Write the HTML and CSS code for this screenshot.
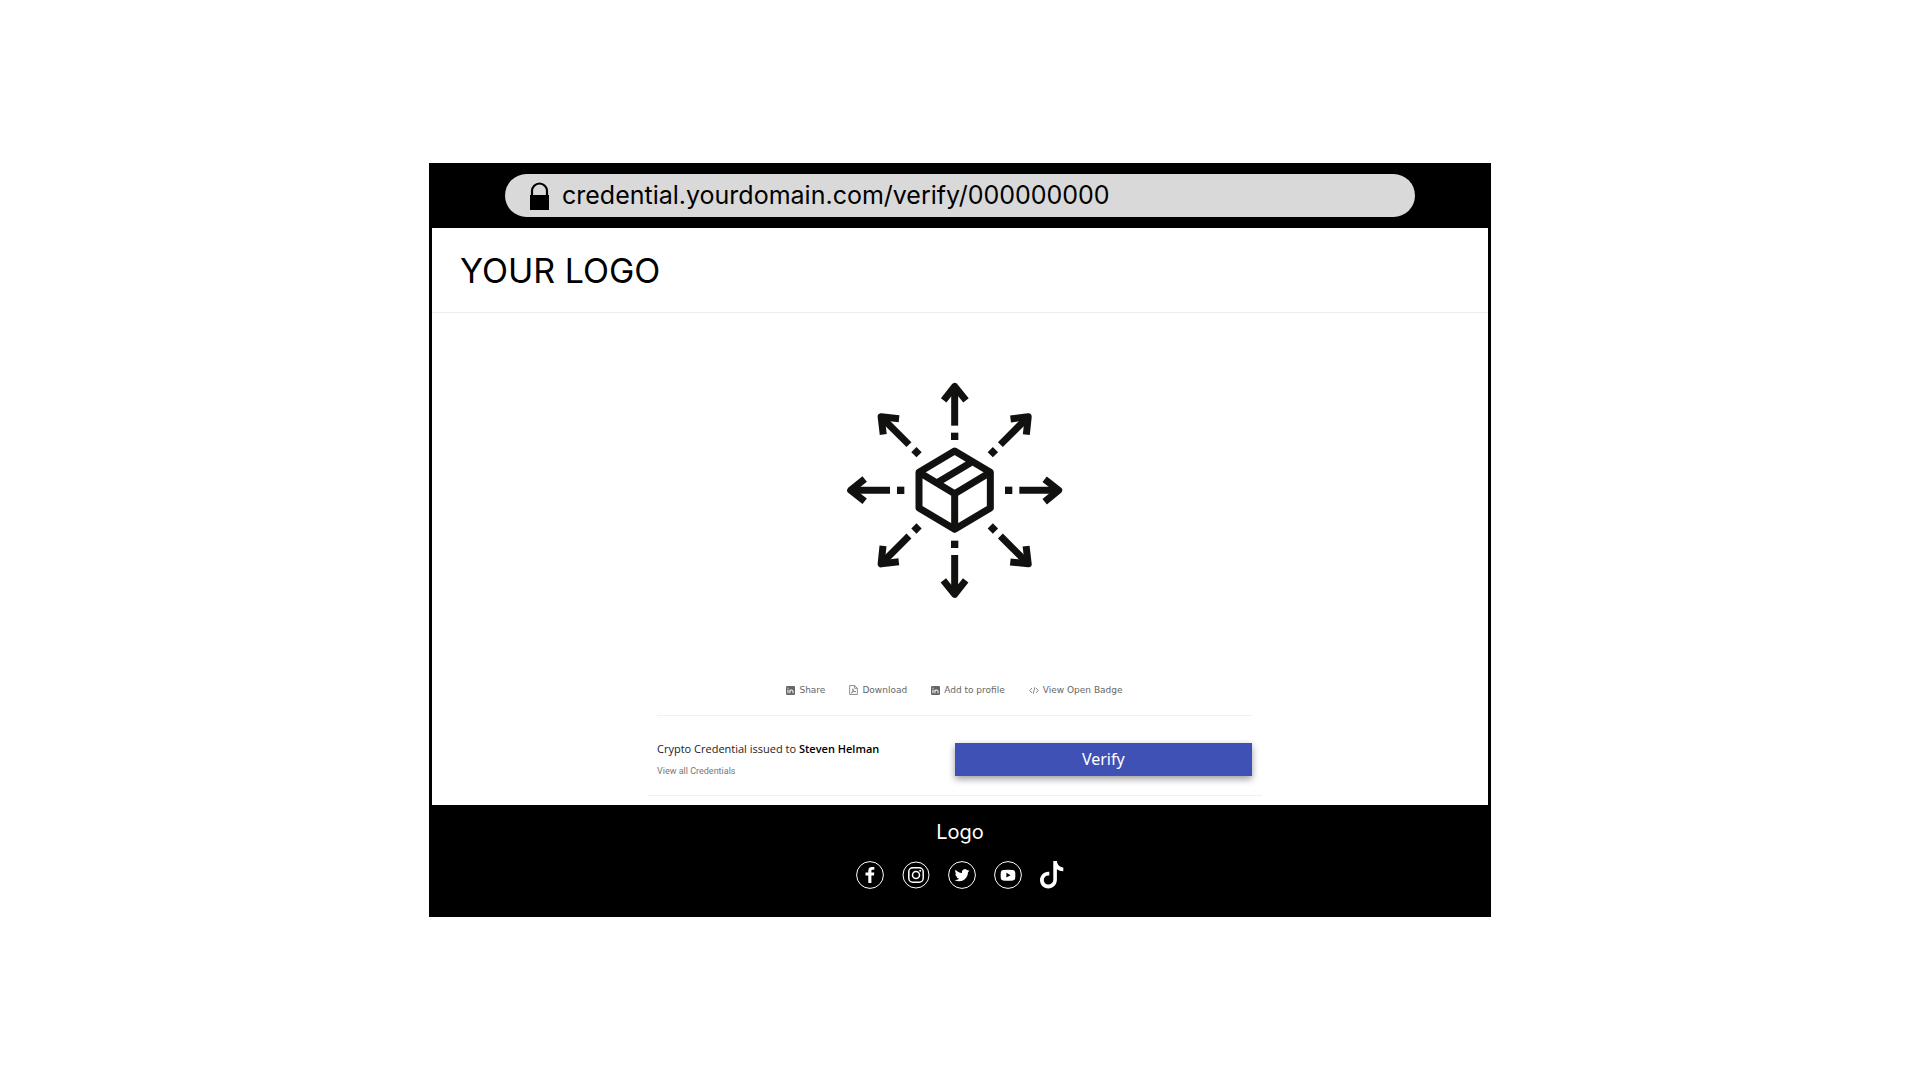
FILE: index.html
```html
<!DOCTYPE html>
<html lang="en">
<head>
<meta charset="utf-8">
<meta name="viewport" content="width=device-width, initial-scale=1">
<title>Credential</title>
<link rel="stylesheet" href="styles.css">
</head>
<body>
<div class="browser">
  <div class="toolbar">
    <label class="address">
      <svg class="lock" viewBox="0 0 20 28" aria-hidden="true"><path d="M0 13h19v15H0z"/><path d="M2 14V9a7.500 7.500 0 0 1 15 0v5" fill="none" stroke="#000" stroke-width="2.200"/></svg>
      <input class="address-input" type="text" value="credential.yourdomain.com/verify/000000000" aria-label="Address" readonly>
    </label>
  </div>
  <div class="page">
    <header class="site-header"><span class="brand">YOUR LOGO</span></header>
    <main class="content">
      <svg class="badge" viewBox="0 0 750 750" role="img" aria-label="Package with arrows in eight directions">
        <defs>
          <g id="arrow">
            <path d="M374 167V58" stroke-width="21"/>
            <path d="M341 91L374 49L408 91" stroke-width="21" stroke-linejoin="round"/>
            <path d="M374 210V188" stroke-width="22"/>
          </g>
        </defs>
        <g fill="none" stroke="#11110f">
          <use href="#arrow"/>
          <use href="#arrow" transform="rotate(45 374 361)"/>
          <use href="#arrow" transform="rotate(90 374 361)"/>
          <use href="#arrow" transform="rotate(135 374 361)"/>
          <use href="#arrow" transform="rotate(180 374 361)"/>
          <use href="#arrow" transform="rotate(225 374 361)"/>
          <use href="#arrow" transform="rotate(270 374 361)"/>
          <use href="#arrow" transform="rotate(315 374 361)"/>
          <path d="M374 243L481 307V414L374 478L267 414V307ZM267 307L374 371L481 307M374 371V478M320 339L427 275" stroke-width="21" stroke-linejoin="round"/>
        </g>
      </svg>
      <nav class="actions" aria-label="Credential actions">
        <a class="action" href="#share"><svg class="action-icon" viewBox="0 0 16 16" aria-hidden="true"><rect width="16" height="16" rx="2" fill="currentColor"/><path d="M3.500 6.500V13M3.500 3v2M7 13V6.500M7 9.500c0-3 5.500-3.500 5.500 0V13" fill="none" stroke="#fff" stroke-width="1.800"/></svg>Share</a>
        <a class="action" href="#download"><svg class="action-icon file" viewBox="0 0 16 18" aria-hidden="true"><path d="M1 1h9l5 5v11H1zM10 1v5h5M4 14.500c2-1 4-5 3-7.500-1-1-1 5 5 5-2-1-5.500 0-8 2.500" fill="none" stroke="currentColor" stroke-width="1.300"/></svg>Download</a>
        <a class="action" href="#profile"><svg class="action-icon" viewBox="0 0 16 16" aria-hidden="true"><rect width="16" height="16" rx="2" fill="currentColor"/><path d="M3.500 6.500V13M3.500 3v2M7 13V6.500M7 9.500c0-3 5.500-3.500 5.500 0V13" fill="none" stroke="#fff" stroke-width="1.800"/></svg>Add to profile</a>
        <a class="action" href="#badge"><svg class="action-icon code" viewBox="0 0 20 16" aria-hidden="true"><path d="M6 3L1.500 8L6 13M14 3l4.500 5L14 13M11.500 1.500l-3 13" fill="none" stroke="currentColor" stroke-width="1.600"/></svg>View Open Badge</a>
      </nav>
      <section class="issued">
        <div class="recipient">
          <p class="recipient-name">Crypto Credential issued to <strong>Steven Helman</strong></p>
          <a class="all-link" href="#all">View all Credentials</a>
        </div>
        <button class="verify" type="button">Verify</button>
      </section>
    </main>
  </div>
  <footer class="site-footer">
    <span class="footer-logo">Logo</span>
    <nav class="socials" aria-label="Social media">
      <a class="social" href="#facebook" aria-label="Facebook"><svg class="social-icon" viewBox="0 0 28 28"><circle cx="14" cy="14" r="13.400" fill="none" stroke="#fff"/><path d="M12.300 22v-7.500H9.500v-3h2.800V9.600C12.300 7 13.800 6 16 6h2.300v2.800h-1.600c-1 0-1.300.5-1.300 1.300v1.400h2.900l-.4 3h-2.500V22z" fill="#fff"/></svg></a>
      <a class="social" href="#instagram" aria-label="Instagram"><svg class="social-icon" viewBox="0 0 28 28"><g fill="none" stroke="#fff"><circle cx="14" cy="14" r="13"/><rect x="6.800" y="6.800" width="14.400" height="14.400" rx="4" stroke-width="1.500"/><circle cx="14" cy="14" r="3.500" stroke-width="1.500"/></g><circle cx="18.200" cy="9.800" r="1" fill="#fff"/></svg></a>
      <a class="social" href="#twitter" aria-label="Twitter"><svg class="social-icon" viewBox="0 0 28 28"><circle cx="14" cy="14" r="13.400" fill="none" stroke="#fff"/><path transform="translate(6.600 6.800) scale(.62)" d="M23.950 4.570a10 10 0 0 1-2.820.77 4.960 4.960 0 0 0 2.160-2.720c-.95.550-2 .96-3.130 1.180a4.920 4.920 0 0 0-8.380 4.480C7.690 8.100 4.070 6.130 1.640 3.160a4.820 4.820 0 0 0-.67 2.480c0 1.700.87 3.210 2.190 4.100a4.900 4.900 0 0 1-2.230-.62v.06a4.920 4.920 0 0 0 3.950 4.830 5 5 0 0 1-2.210.08 4.940 4.940 0 0 0 4.600 3.420A9.870 9.870 0 0 1 0 19.540a14 14 0 0 0 7.550 2.210c9.050 0 14-7.500 14-13.980 0-.21 0-.42-.02-.63a9.940 9.940 0 0 0 2.460-2.550z" fill="#fff"/></svg></a>
      <a class="social" href="#youtube" aria-label="YouTube"><svg class="social-icon" viewBox="0 0 28 28"><circle cx="14" cy="14" r="13.400" fill="none" stroke="#fff"/><path d="M9 9q5-.6 10 0 2 .2 2.200 2.200.3 3 0 6Q21 19.300 19 19.500q-5 .5-10 0-2-.2-2.200-2.300-.3-3 0-6Q7 9.200 9 9z" fill="#fff"/><path d="M12.400 11.800l4.200 2.400-4.200 2.400z"/></svg></a>
      <a class="social" href="#tiktok" aria-label="TikTok"><svg class="social-icon tiktok" viewBox="0 0 24 28"><path d="M13.300 0h3.600c.3 3.600 2.700 6.200 6.400 6.500v3.800c-2.500 0-4.600-.8-6.400-2v10.200c0 5.500-4 9-8.600 9-4.900 0-8.300-3.900-8.300-8.400 0-5 4.200-9 9.300-8.400v3.900c-2.800-.6-5.500 1.300-5.500 4.400 0 2.500 1.900 4.500 4.300 4.500 2.700 0 5.200-1.800 5.200-5z" fill="#fff"/></svg></a>
    </nav>
  </footer>
</div>
</body>
</html>
```
FILE: styles.css
```css
* { box-sizing: border-box; }

body {
  margin: 0;
  min-height: 100vh;
  display: flex;
  align-items: center;
  justify-content: center;
  background: #fff;
  color: #000;
  font-family: Inter, "Liberation Sans", sans-serif;
}

a { color: inherit; text-decoration: none; }
svg { display: block; flex: none; }

.browser { width: 100%; max-width: 1062px; background: #000; }

.toolbar { padding: 11px 76px; }

.address {
  display: flex;
  align-items: center;
  gap: 12px;
  height: 43px;
  padding: 0 25px;
  border-radius: 22px;
  background: #d9d9d9;
}

.lock { width: 20px; height: 28px; }

.address-input {
  flex: 1;
  min-width: 0;
  padding: 0 0 1px;
  border: 0;
  outline: 0;
  background: transparent;
  color: #000;
  font: 25px/32px Inter, "Liberation Sans", sans-serif;
}

.page { margin: 0 3px; background: #fff; }

.site-header {
  display: flex;
  align-items: center;
  height: 85px;
  padding: 2px 28px 0;
  border-bottom: 1px solid #ececec;
}

.brand { font-size: 34px; line-height: 40px; }

.content {
  display: flex;
  flex-direction: column;
  align-items: center;
  padding: 57px 11px 9px 0;
}

.badge { width: 250px; height: 250px; }

.actions {
  display: flex;
  justify-content: center;
  gap: 24px;
  width: 100%;
  max-width: 595px;
  padding: 63px 0 18px;
  border-bottom: 1px solid #f0f0f0;
  color: #666;
  font: 9px/14px "DejaVu Sans", sans-serif;
}

.action { display: flex; align-items: center; gap: 4px; }
.action-icon { width: 9px; height: 9px; }
.action-icon.file { height: 10px; }
.action-icon.code { width: 10px; }

.issued {
  display: flex;
  align-items: flex-start;
  justify-content: space-between;
  width: 100%;
  max-width: 615px;
  padding: 27px 10px 16px;
  border-bottom: 1px solid #f0f0f0;
}

.recipient { color: #222; font: 11px/12px "Open Sans", sans-serif; }
.recipient-name { margin: 0 0 8px; }
.recipient-name strong { color: #000; font-weight: 600; }
.all-link { display: block; color: #777; font: 9px/16px Roboto, "Liberation Sans", sans-serif; }

.verify {
  width: 50%;
  height: 33px;
  padding: 0 0 1px;
  border: 0;
  background: #3f51b5;
  color: #fff;
  font: 16px/20px "Noto Sans", sans-serif;
  box-shadow: 0 3px 7px rgba(0, 0, 0, 0.4);
}

.site-footer {
  display: flex;
  flex-direction: column;
  align-items: center;
  gap: 17px;
  padding: 15px 0 28px;
  color: #fff;
}

.footer-logo { font-size: 20px; line-height: 24px; }
.socials { display: flex; gap: 18px; }
.social-icon { width: 28px; height: 28px; }
.social-icon.tiktok { width: 24px; }
```
